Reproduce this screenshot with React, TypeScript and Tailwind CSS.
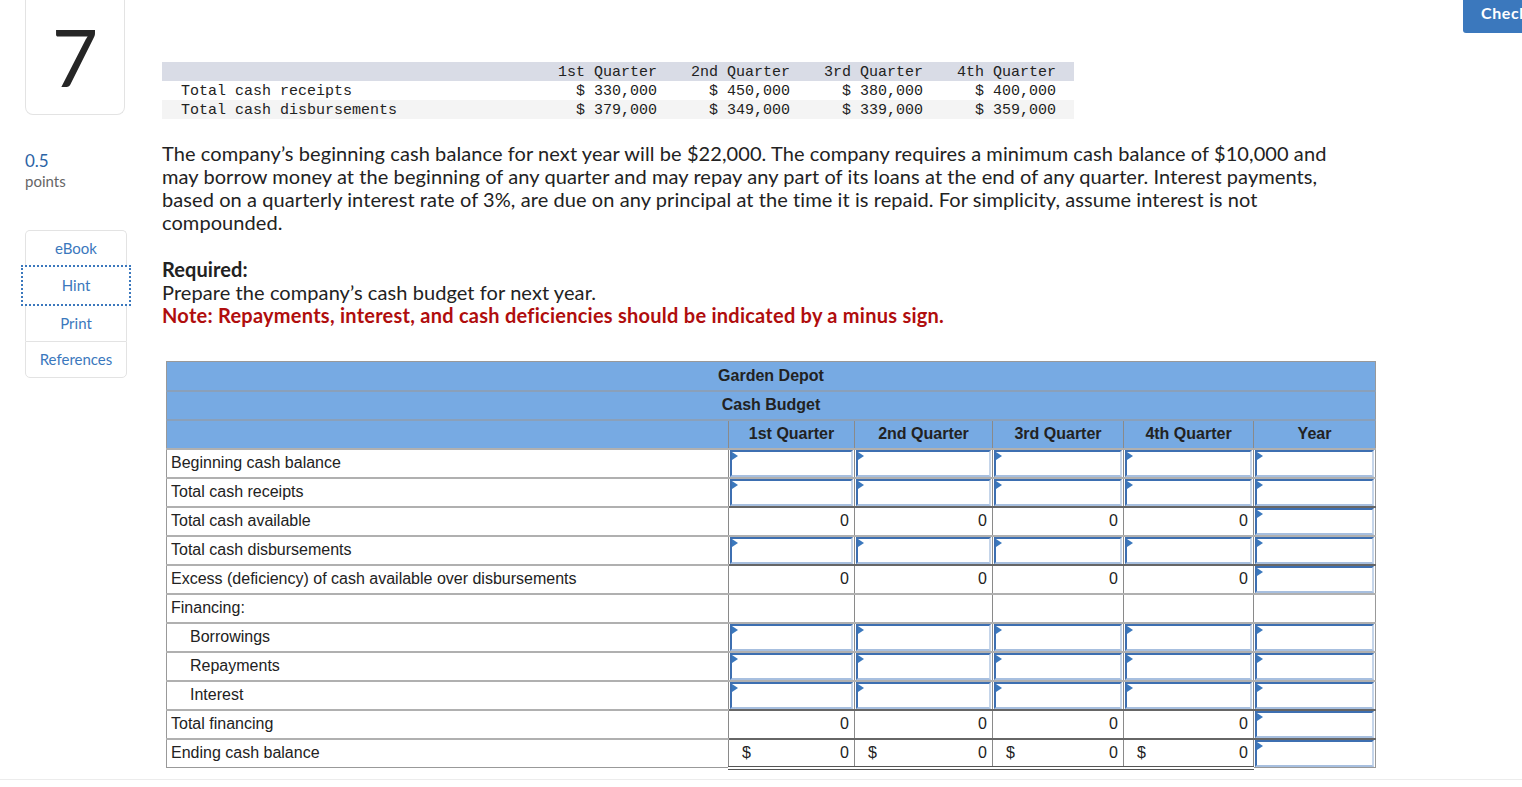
type RowKind = "input" | "total" | "blank" | "dollar";

const rows: { label: string; kind: RowKind; indent?: boolean }[] = [
  { label: "Beginning cash balance", kind: "input" },
  { label: "Total cash receipts", kind: "input" },
  { label: "Total cash available", kind: "total" },
  { label: "Total cash disbursements", kind: "input" },
  { label: "Excess (deficiency) of cash available over disbursements", kind: "total" },
  { label: "Financing:", kind: "blank" },
  { label: "Borrowings", kind: "input", indent: true },
  { label: "Repayments", kind: "input", indent: true },
  { label: "Interest", kind: "input", indent: true },
  { label: "Total financing", kind: "total" },
  { label: "Ending cash balance", kind: "dollar" },
];

const quarters = ["1st Quarter", "2nd Quarter", "3rd Quarter", "4th Quarter"];

const given = [
  { label: "Total cash receipts", values: ["$ 330,000", "$ 450,000", "$ 380,000", "$ 400,000"] },
  { label: "Total cash disbursements", values: ["$ 379,000", "$ 349,000", "$ 339,000", "$ 359,000"] },
];

function InputBox() {
  return (
    <div className="relative mx-px h-[27px] border-2 border-t-[#3d6fb1] border-l-[#3d6fb1] border-b-[#a7bfdf] border-r-[#c5d5ea] bg-white">
      <span className="absolute left-0 top-0 h-0 w-0 border-y-[4px] border-l-[6px] border-y-transparent border-l-[#3b78bd]" />
    </div>
  );
}

export default function App() {
  return (
    <div className="relative h-[787px] w-full overflow-hidden bg-white text-[#222] [font-family:'Lato',sans-serif]">
      {/* check button, runs off the right edge */}
      <div className="absolute left-[1463px] top-0 h-[33px] whitespace-nowrap rounded-bl-[3px] bg-[#3b78bd] pl-[18px] pr-4 pt-[1px] text-[16px] font-bold tracking-[0.6px] text-white">
        Check my work
      </div>

      <div className="flex">
        {/* left rail */}
        <div className="w-[162px] shrink-0 pl-[25px]">
          <div className="flex h-[115px] w-[100px] items-center justify-center rounded-b-[8px] border border-t-0 border-[#e3e3e3] pb-[2px] text-[80px] leading-none text-[#262626]">
            7
          </div>
          <div className="mt-[36px] text-[17px] leading-[20px] text-[#2b63a5]">0.5</div>
          <div className="text-[15px] leading-[20px] text-[#666]">points</div>

          <div className="mt-[39px] w-[102px] text-[15px] text-[#3b78bd]">
            <div className="flex h-[35px] items-center justify-center rounded-t-[5px] border border-b-0 border-[#e3e3e3]">
              eBook
            </div>
            <div className="-mx-[4px] flex h-[41px] items-center justify-center border-2 border-dotted border-[#3b78bd]">
              Hint
            </div>
            <div className="flex h-[35px] items-center justify-center border-x border-[#e3e3e3]">
              Print
            </div>
            <div className="flex h-[37px] items-center justify-center rounded-b-[5px] border border-[#e3e3e3]">
              References
            </div>
          </div>
        </div>

        {/* main */}
        <div className="pt-[62px]">
          <div className="w-[912px] text-[15px] leading-[16px] text-[#222] [font-family:'Liberation_Mono',monospace]">
            <div className="flex h-[19px] bg-[#d9dce6] pt-[3px]">
              <div className="w-[380px]" />
              {quarters.map((q) => (
                <div key={q} className="w-[133px] pr-[18px] text-right">
                  {q}
                </div>
              ))}
            </div>
            {given.map((r, i) => (
              <div key={r.label} className={`flex h-[19px] pt-[3px] ${i === 1 ? "bg-[#f4f4f4]" : "bg-white"}`}>
                <div className="w-[380px] pl-[19px]">{r.label}</div>
                {r.values.map((v) => (
                  <div key={v} className="w-[133px] pr-[18px] text-right">
                    {v}
                  </div>
                ))}
              </div>
            ))}
          </div>

          <p className="mt-[23px] w-[1175px] text-[20px] leading-[23px] tracking-[0.08px] text-[#222]">
            The company’s beginning cash balance for next year will be $22,000. The company requires a minimum cash balance of $10,000 and may borrow money at the beginning of any quarter and may repay any part of its loans at the end of any quarter. Interest payments, based on a quarterly interest rate of 3%, are due on any principal at the time it is repaid. For simplicity, assume interest is not compounded.
          </p>

          <div className="mt-[24px] text-[20px] leading-[23px] tracking-[0.08px]">
            <div className="font-bold">Required:</div>
            <div>Prepare the company’s cash budget for next year.</div>
            <div className="font-bold tracking-[0.25px] text-[#b00d0d]">
              Note: Repayments, interest, and cash deficiencies should be indicated by a minus sign.
            </div>
          </div>

          <table className="ml-[4px] mt-[34px] w-[1209px] table-fixed border-collapse border border-[#999] text-[16px] [font-family:'Liberation_Sans',Arial,sans-serif]">
            <colgroup>
              <col className="w-[562px]" />
              <col className="w-[126px]" />
              <col className="w-[138px]" />
              <col className="w-[131px]" />
              <col className="w-[130px]" />
              <col className="w-[122px]" />
            </colgroup>
            <thead className="bg-[#77aae3] font-bold">
              <tr className="h-[29px] border-b-2 border-[#8aa0ba]">
                <th colSpan={6} className="font-bold">Garden Depot</th>
              </tr>
              <tr className="h-[29px] border-b-2 border-[#8aa0ba]">
                <th colSpan={6} className="font-bold">Cash Budget</th>
              </tr>
              <tr className="h-[29px]">
                <th />
                {[...quarters, "Year"].map((q) => (
                  <th key={q} className="border-l border-[#8a8a8a] font-bold">
                    {q}
                  </th>
                ))}
              </tr>
            </thead>
            <tbody>
              {rows.map((r) => {
                const top = r.kind === "total" || r.kind === "dollar" ? "border-t-2 border-t-[#666]" : "border-t-2 border-t-[#b0b0b0]";
                return (
                  <tr key={r.label} className={`h-[29px] ${top}`}>
                    <td className={`border-t-2 border-t-[#b0b0b0] p-0 leading-[26px] ${r.indent ? "pl-[23px]" : "pl-[4px]"}`}>
                      {r.label}
                    </td>
                    {[0, 1, 2, 3].map((i) => (
                      <td
                        key={i}
                        className={`border-l border-[#8a8a8a] p-0 ${r.kind === "dollar" ? "border-b-[4px] border-b-[#555] border-double" : ""}`}
                      >
                        {r.kind === "input" && <InputBox />}
                        {r.kind === "total" && <div className="pr-[5px] text-right leading-[26px]">0</div>}
                        {r.kind === "dollar" && (
                          <div className="flex justify-between pl-[13px] pr-[5px] leading-[26px]">
                            <span>$</span>
                            <span>0</span>
                          </div>
                        )}
                      </td>
                    ))}
                    <td className="border-l border-[#8a8a8a] p-0">
                      {r.kind !== "blank" && <InputBox />}
                    </td>
                  </tr>
                );
              })}
            </tbody>
          </table>
        </div>
      </div>

      <div className="mt-[9px] border-t border-[#ececec]" />
    </div>
  );
}
